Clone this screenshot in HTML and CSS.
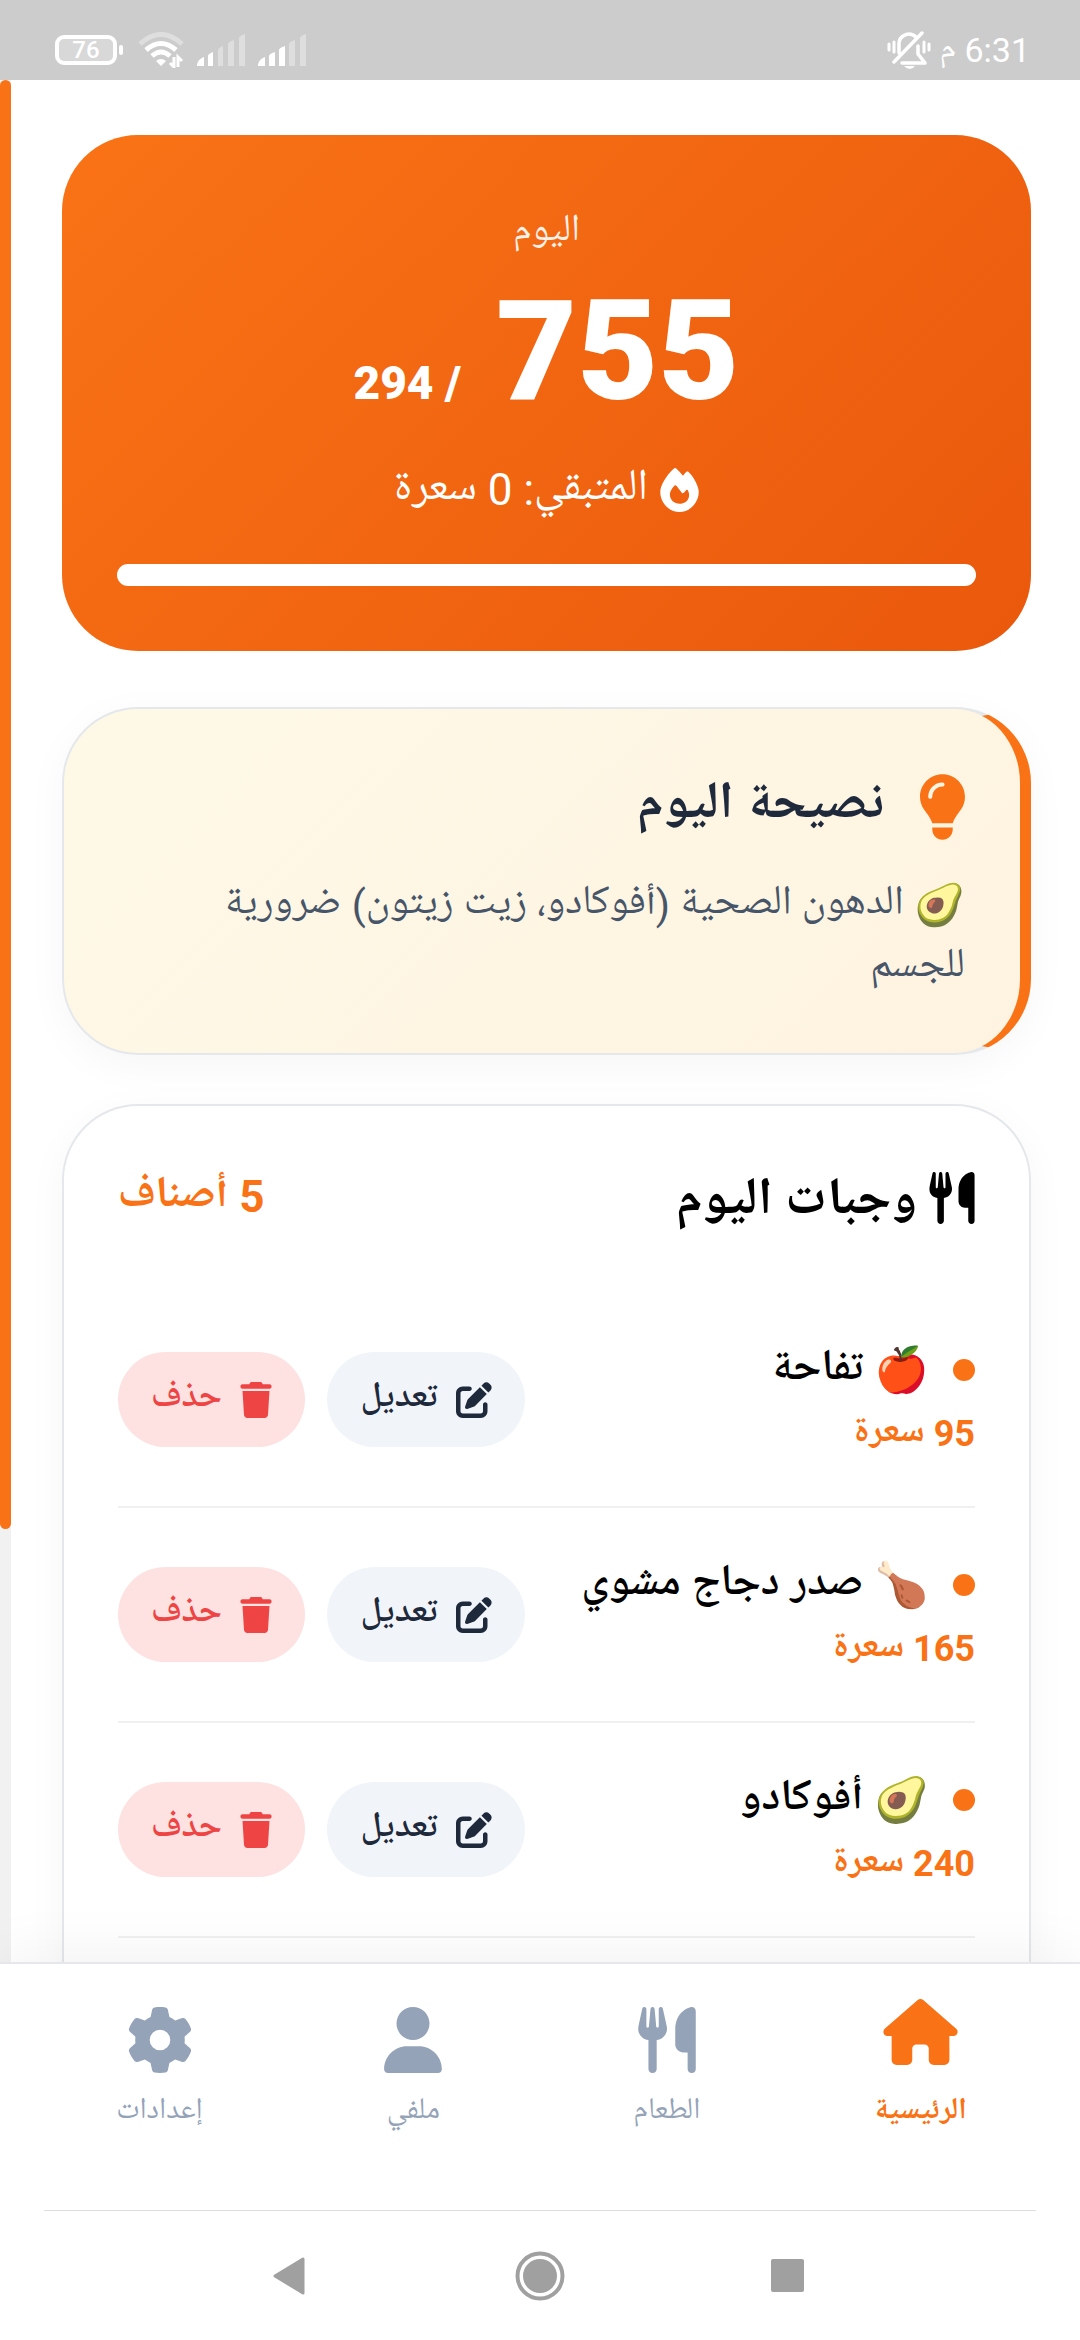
FILE: index.html
```html
<!DOCTYPE html>
<html lang="ar" dir="rtl">
<head>
<meta charset="utf-8">
<meta name="viewport" content="width=device-width, initial-scale=1">
<title>وجبات اليوم</title>
<link rel="stylesheet" href="styles.css">
</head>
<body>
<svg class="sprite" aria-hidden="true">
  <symbol id="utensils" viewBox="0 0 448 512"><path d="M416 0C400 0 288 32 288 176V288c0 35.300 28.700 64 64 64h32V480c0 17.700 14.300 32 32 32s32-14.300 32-32V352 240 32c0-17.700-14.300-32-32-32zM64 16C64 7.800 57.900 1 49.700 .1S34.200 4.600 32.400 12.500L2.100 148.800C.7 155.100 0 161.500 0 167.900c0 45.900 35.100 83.600 80 87.700V480c0 17.700 14.300 32 32 32s32-14.300 32-32V255.600c44.900-4.100 80-41.800 80-87.700c0-6.400-.7-12.800-2.100-19.100L191.600 12.500c-1.800-8-9.300-13.300-17.400-12.400S160 7.800 160 16V150.200c0 5.400-4.400 9.800-9.800 9.800c-5.100 0-9.300-3.900-9.800-9L127.900 14.600C127.200 6.300 120.300 0 112 0s-15.200 6.300-15.900 14.600L83.700 151c-.5 5.100-4.700 9-9.800 9c-5.400 0-9.800-4.400-9.800-9.800V16z"/></symbol>
  <symbol id="pen" viewBox="0 0 512 512"><path d="M471.600 21.700c-21.900-21.900-57.300-21.900-79.200 0L362.300 51.700l97.900 97.900 30.100-30.100c21.900-21.900 21.900-57.300 0-79.200L471.600 21.700zm-299.200 220c-6.100 6.100-10.800 13.600-13.500 21.900l-29.600 88.800c-2.900 8.600-.6 18.100 5.800 24.600s15.900 8.700 24.600 5.800l88.800-29.600c8.200-2.700 15.700-7.400 21.900-13.500L437.700 172.300 339.700 74.300 172.400 241.700zM96 64C43 64 0 107 0 160V416c0 53 43 96 96 96H352c53 0 96-43 96-96V320c0-17.700-14.300-32-32-32s-32 14.300-32 32v96c0 17.700-14.300 32-32 32H96c-17.700 0-32-14.300-32-32V160c0-17.700 14.300-32 32-32h96c17.700 0 32-14.300 32-32s-14.300-32-32-32H96z"/></symbol>
  <symbol id="trash" viewBox="0 0 448 512"><path d="M135.200 17.700L128 32H32C14.300 32 0 46.300 0 64S14.300 96 32 96H416c17.700 0 32-14.300 32-32s-14.300-32-32-32H320l-7.200-14.300C307.400 6.800 296.300 0 284.200 0H163.800c-12.100 0-23.200 6.800-28.600 17.700zM416 128H32L53.200 467c1.600 25.300 22.600 45 47.900 45H346.900c25.300 0 46.300-19.700 47.900-45L416 128z"/></symbol>
  <symbol id="signal-off" viewBox="0 0 48 32"><path d="M0 32c0-4 2-7 7-9v9zM11 32V22q0-2 5-4v14z"/><path opacity=".35" d="M21 32V16q0-2 5-4v20zM31 32V10q0-2 6-4v26zM42 32V4q0-2 6-4v32z"/></symbol>
  <symbol id="signal-on" viewBox="0 0 48 32"><path d="M0 32c0-4 2-7 7-9v9zM11 32V22q0-2 6-4v14zM21 32V16q0-2 6-4v20z"/><path opacity=".35" d="M31 32V10q0-2 6-4v26zM42 32V4q0-2 6-4v32z"/></symbol>
</svg>

<header class="status">
  <div class="status-group time">
    <span class="clock">6:31 م</span>
    <svg class="bell" viewBox="0 0 44 40" fill="none" stroke="currentColor" stroke-width="3.500" stroke-linecap="round"><path d="M12 23V15a10 10 0 0 1 17-8M31 16v8l7 9H15M7 32 35 3" stroke-linejoin="round"/><path d="M2 14v6M7 12v10M37 12v10M42 14v6" stroke-width="3"/><path d="M17 36h11q-5 6-11 0z" fill="currentColor" stroke="none"/></svg>
  </div>
  <div class="status-group">
    <svg class="signal" viewBox="0 0 48 32" fill="currentColor"><use href="#signal-on"/></svg>
    <svg class="signal" viewBox="0 0 48 32" fill="currentColor"><use href="#signal-off"/></svg>
    <svg class="wifi" viewBox="0 0 46 36" fill="none" stroke="currentColor" stroke-width="5"><path opacity=".35" d="M2 12Q23-7 44 12"/><path d="M8 18q15-13 30 0M14 24q9-8 18 0"/><path d="M23 34l-5-5q5-4 10 0z" fill="currentColor" stroke="none"/><path d="M36 25v10l-4-4M40 35V25l4 4" stroke-width="3"/></svg>
    <div class="battery"><span>76</span></div>
  </div>
</header>

<div class="viewport">
  <main class="content">
    <section class="card summary">
      <p class="summary-day">اليوم</p>
      <p class="summary-total">755 <span class="goal">/ 294</span></p>
      <p class="summary-left"><svg class="fire" viewBox="0 0 448 512" fill="currentColor"><path d="M159.300 5.400c7.800-7.300 19.900-7.200 27.700 .1c27.600 25.900 53.500 53.800 77.700 84c11-14.400 23.500-30.100 37-42.900c7.900-7.400 20.100-7.400 28 .1c34.600 33 63.900 76.600 84.500 118c20.300 40.800 33.800 82.500 33.800 111.900C448 404.200 348.200 512 224 512C98.400 512 0 404.100 0 276.500c0-38.400 17.800-85.300 45.400-131.700C73.300 97.700 112.700 48.600 159.300 5.400zM225.700 416c25.300 0 47.700-7 68.800-21c42.100-29.400 53.400-88.200 28.100-134.400c-4.500-9-16-9.600-22.500-2l-25.200 29.300c-6.600 7.600-18.500 7.400-24.700-.5c-16.500-21-46-58.500-62.800-79.800c-6.300-8-18.300-8.100-24.700-.1c-33.800 42.500-50.800 69.300-50.800 99.400C112 375.400 162.600 416 225.700 416z"/></svg><span>المتبقي: 0 سعرة</span></p>
      <div class="progress"></div>
    </section>

    <section class="card tip">
      <h2 class="tip-title"><svg class="bulb" viewBox="16 0 352 512" fill="currentColor"><path d="M272 384c9.600-31.900 29.500-59.100 49.200-86.200c5.200-7.100 10.400-14.200 15.400-21.400c19.800-28.500 31.400-63 31.400-100.300C368 78.800 289.200 0 192 0S16 78.800 16 176c0 37.300 11.600 71.900 31.400 100.300c5 7.200 10.200 14.300 15.400 21.400c19.800 27.100 39.700 54.400 49.200 86.200H272zM192 512c44.200 0 80-35.800 80-80V416H112v16c0 44.200 35.800 80 80 80zM112 176c0 8.800-7.200 16-16 16s-16-7.200-16-16c0-61.900 50.100-112 112-112c8.800 0 16 7.200 16 16s-7.200 16-16 16c-44.200 0-80 35.800-80 80z"/></svg>نصيحة اليوم</h2>
      <p class="tip-text">🥑 الدهون الصحية (أفوكادو، زيت زيتون) ضرورية للجسم</p>
    </section>

    <section class="card meals">
      <div class="meals-head">
        <h2 class="meals-title"><svg class="icon-title" viewBox="0 0 448 512" fill="currentColor"><use href="#utensils"/></svg>وجبات اليوم</h2>
        <span class="count">5 أصناف</span>
      </div>
      <ul class="list">
        <li class="meal">
          <div class="meal-info"><p class="meal-name"><span class="dot"></span>🍎 تفاحة</p><p class="meal-cal">95 سعرة</p></div>
          <div class="actions">
            <button class="btn edit"><svg class="icon-pen" viewBox="0 0 512 512" fill="currentColor"><use href="#pen"/></svg><span>تعديل</span></button>
            <button class="btn delete"><svg class="icon-trash" viewBox="0 0 448 512" fill="currentColor"><use href="#trash"/></svg><span>حذف</span></button>
          </div>
        </li>
        <li class="meal">
          <div class="meal-info"><p class="meal-name"><span class="dot"></span>🍗 صدر دجاج مشوي</p><p class="meal-cal">165 سعرة</p></div>
          <div class="actions">
            <button class="btn edit"><svg class="icon-pen" viewBox="0 0 512 512" fill="currentColor"><use href="#pen"/></svg><span>تعديل</span></button>
            <button class="btn delete"><svg class="icon-trash" viewBox="0 0 448 512" fill="currentColor"><use href="#trash"/></svg><span>حذف</span></button>
          </div>
        </li>
        <li class="meal">
          <div class="meal-info"><p class="meal-name"><span class="dot"></span>🥑 أفوكادو</p><p class="meal-cal">240 سعرة</p></div>
          <div class="actions">
            <button class="btn edit"><svg class="icon-pen" viewBox="0 0 512 512" fill="currentColor"><use href="#pen"/></svg><span>تعديل</span></button>
            <button class="btn delete"><svg class="icon-trash" viewBox="0 0 448 512" fill="currentColor"><use href="#trash"/></svg><span>حذف</span></button>
          </div>
        </li>
      </ul>
    </section>
  </main>
  <div class="track"><div class="thumb"></div></div>
</div>

<nav class="tabs">
  <a class="tab active" href="#home"><svg class="tab-icon home" viewBox="0 0 576 512" fill="currentColor"><path d="M575.800 255.500c0 18-15 32.100-32 32.100h-32l.7 160.200c0 2.700-.2 5.400-.5 8.100V472c0 22.100-17.900 40-40 40H392c-22.100 0-40-17.900-40-40V384c0-17.700-14.300-32-32-32H256c-17.700 0-32 14.300-32 32v88c0 22.100-17.900 40-40 40H104c-22.100 0-40-17.900-40-40V287.600H32c-18 0-32-14-32-32.100c0-9 3-17 10-24L266.400 8c7-7 15-8 22-8s15 2 21 7L564.800 231.500c8 7 12 15 11 24z"/></svg><span>الرئيسية</span></a>
  <a class="tab" href="#food"><svg class="tab-icon" viewBox="0 0 448 512" fill="currentColor"><use href="#utensils"/></svg><span>الطعام</span></a>
  <a class="tab" href="#profile"><svg class="tab-icon" viewBox="0 0 448 512" fill="currentColor"><path d="M224 256A128 128 0 1 0 224 0a128 128 0 1 0 0 256zm-45.700 48C79.800 304 0 383.800 0 482.300C0 498.700 13.300 512 29.700 512H418.300c16.400 0 29.700-13.300 29.700-29.700C448 383.800 368.200 304 269.700 304H178.300z"/></svg><span>ملفي</span></a>
  <a class="tab" href="#settings"><svg class="tab-icon" viewBox="0 0 512 512" fill="currentColor"><path d="M495.900 166.600c3.200 8.700 .5 18.400-6.400 24.600l-43.300 39.400c1.100 8.300 1.700 16.800 1.700 25.400s-.6 17.100-1.700 25.400l43.300 39.400c6.900 6.200 9.600 15.900 6.400 24.600c-4.400 11.900-9.700 23.300-15.800 34.300l-4.700 8.100c-6.600 11-14 21.400-22.100 31.200c-5.900 7.200-15.700 9.600-24.500 6.800l-55.700-17.700c-13.400 10.300-28.200 18.900-44 25.400l-12.500 57.100c-2 9.100-9 16.300-18.200 17.800c-13.800 2.300-28 3.500-42.500 3.500s-28.700-1.200-42.500-3.500c-9.200-1.500-16.200-8.700-18.200-17.800l-12.500-57.100c-15.800-6.500-30.600-15.100-44-25.400L83.100 425.900c-8.800 2.800-18.600 .3-24.500-6.800c-8.100-9.800-15.500-20.200-22.100-31.200l-4.700-8.100c-6.100-11-11.400-22.400-15.800-34.300c-3.200-8.700-.5-18.400 6.400-24.600l43.300-39.400C64.600 273.100 64 264.600 64 256s.6-17.100 1.700-25.400L22.400 191.200c-6.900-6.200-9.600-15.900-6.400-24.600c4.400-11.900 9.700-23.300 15.800-34.300l4.700-8.100c6.600-11 14-21.400 22.100-31.200c5.900-7.200 15.700-9.600 24.500-6.800l55.700 17.700c13.400-10.300 28.200-18.900 44-25.400l12.500-57.100c2-9.100 9-16.300 18.200-17.800C227.300 1.200 241.500 0 256 0s28.700 1.200 42.500 3.500c9.200 1.500 16.200 8.700 18.200 17.800l12.500 57.100c15.800 6.500 30.600 15.100 44 25.400l55.700-17.700c8.800-2.800 18.600-.3 24.500 6.800c8.100 9.800 15.500 20.200 22.100 31.200l4.700 8.100c6.100 11 11.400 22.400 15.800 34.300zM256 336a80 80 0 1 0 0-160 80 80 0 1 0 0 160z"/></svg><span>إعدادات</span></a>
</nav>

<footer class="system">
  <button class="sys" aria-label="التطبيقات الأخيرة"><svg viewBox="0 0 50 50" fill="currentColor"><rect x="8" y="8" width="33" height="33" rx="2"/></svg></button>
  <button class="sys" aria-label="الشاشة الرئيسية"><svg viewBox="0 0 50 50" fill="currentColor"><circle cx="25" cy="25" r="17"/><circle cx="25" cy="25" r="22.500" fill="none" stroke="currentColor" stroke-width="4"/></svg></button>
  <button class="sys" aria-label="رجوع"><svg viewBox="0 0 50 50" fill="currentColor" stroke="currentColor" stroke-width="3" stroke-linejoin="round"><path d="M8 25 36 8v34z"/></svg></button>
</footer>
</body>
</html>
```
FILE: styles.css
```css
* { box-sizing: border-box; }

body {
  margin: 0;
  height: 100vh;
  display: flex;
  flex-direction: column;
  background: #fff;
  color: #000;
  font-family: Roboto, "Noto Naskh Arabic UI", "Noto Naskh Arabic", "Noto Sans Arabic", "DejaVu Sans", "Noto Color Emoji", sans-serif;
}

h2, p, ul { margin: 0; padding: 0; }
svg { display: block; flex: none; }
button { border: 0; font-family: inherit; }
.sprite { position: absolute; width: 0; height: 0; }

/* device status bar */
.status {
  flex: none;
  height: 80px;
  padding: 20px 50px 0 55px;
  display: flex;
  align-items: center;
  justify-content: space-between;
  background: #ccc;
  color: #fff;
}
.status-group { display: flex; align-items: center; gap: 13px; }
.time { gap: 8px; }
.clock { font-size: 34px; line-height: 40px; }
.bell { width: 44px; height: 40px; }
.signal { width: 48px; height: 32px; }
.wifi { width: 46px; height: 36px; }
.battery {
  position: relative;
  width: 62px;
  height: 30px;
  margin-right: 8px;
  border: 4px solid #fff;
  border-radius: 9px;
  display: flex;
  align-items: center;
  justify-content: center;
  background: #d8d8d8;
  font-size: 24px;
  font-weight: 500;
}
.battery::after {
  content: "";
  position: absolute;
  right: -10px;
  width: 4px;
  height: 10px;
  border-radius: 2px;
  background: #fff;
}

/* scrolling area */
.viewport { flex: 1; min-height: 0; display: flex; }
.content {
  flex: 1;
  min-width: 0;
  overflow: hidden;
  display: flex;
  flex-direction: column;
  padding: 55px 49px 0 51px;
}
.track { flex: none; width: 11px; background: #f1f1f1; }
.thumb { height: 77%; border-radius: 6px; background: #f97316; }

.card {
  flex: none;
  border: 2px solid #e5e8eb;
  border-radius: 76px;
  box-shadow: 0 10px 40px rgba(0, 0, 0, .04);
}

.summary {
  height: 516px;
  margin-bottom: 56px;
  padding: 66px 55px 0;
  border: 0;
  background: linear-gradient(135deg, #f97316, #ea580c);
  color: #fff;
  text-align: center;
  box-shadow: none;
}
.summary-day { font-size: 38px; line-height: 62px; opacity: .9; }
.summary-total { font-size: 140px; font-weight: 900; line-height: 176px; }
.goal { font-size: 46px; line-height: 1; }
.summary-left {
  margin-top: 17px;
  display: flex;
  justify-content: center;
  align-items: center;
  gap: 12px;
  font-size: 44px;
  line-height: 68px;
}
.fire { width: 39px; height: 44px; }
.progress { margin-top: 40px; height: 22px; border-radius: 11px; background: #fff; }

.tip {
  height: 348px;
  margin-bottom: 49px;
  padding: 55px 55px 55px 66px;
  border-right: 11px solid #f97316;
  background: linear-gradient(135deg, #fef9e7, #fef3e0);
}
.tip-title {
  display: flex;
  align-items: center;
  gap: 36px;
  font-size: 52px;
  font-weight: 700;
  line-height: 86px;
  color: #1e293b;
}
.bulb { width: 45px; height: 66px; color: #f97316; }
.tip-text { margin-top: 24px; font-size: 41px; line-height: 63px; color: #475569; }

.meals {
  flex: 1 0 auto;
  padding: 55px 54px 0;
  border-bottom: 0;
  border-radius: 76px 76px 0 0;
}
.meals-head { display: flex; justify-content: space-between; height: 132px; }
.meals-title { display: flex; align-items: center; gap: 12px; height: 84px; font-size: 52px; font-weight: 700; line-height: 84px; }
.icon-title { width: 46px; height: 52px; margin-bottom: 10px; }
.count { font-size: 44px; font-weight: 700; line-height: 72px; color: #f97316; }

.list { list-style: none; }
.meal {
  display: flex;
  align-items: center;
  justify-content: space-between;
  height: 215px;
  border-bottom: 2px solid #f0f0f0;
}
.meal-name { display: flex; align-items: center; font-size: 44px; font-weight: 600; line-height: 68px; }
.dot { width: 22px; height: 22px; margin-left: 24px; border-radius: 50%; background: #f97316; }
.meal-cal { font-size: 36px; font-weight: 700; line-height: 60px; color: #f97316; }
.actions { display: flex; gap: 22px; }
.btn {
  display: flex;
  align-items: center;
  justify-content: center;
  gap: 18px;
  height: 95px;
  padding: 0;
  border-radius: 48px;
  font-size: 36px;
  font-weight: 600;
}
.btn span { padding-bottom: 4px; }
.edit { width: 198px; background: #f1f5f9; color: #1e293b; }
.delete { width: 187px; background: #fee2e2; color: #ef4444; }
.icon-pen { width: 36px; height: 36px; }
.icon-trash { width: 32px; height: 36px; }

/* bottom tabs */
.tabs {
  position: relative;
  flex: none;
  display: flex;
  height: 248px;
  padding: 43px 33px 0;
  border-top: 2px solid #e5e8eb;
  background: #fff;
  box-shadow: 0 -10px 54px rgba(0, 0, 0, .05);
  clip-path: inset(-80px 0 0 0);
}
.tab {
  flex: 1;
  display: flex;
  flex-direction: column;
  align-items: center;
  gap: 14px;
  color: #94a3b8;
  font-size: 30px;
  line-height: 50px;
  text-decoration: none;
}
.tab-icon { width: 66px; height: 66px; }
.home { width: 75px; margin-top: -8px; margin-bottom: 8px; }
.active { color: #f97316; font-weight: 700; }

/* system navigation */
.system {
  flex: none;
  display: flex;
  align-items: center;
  justify-content: center;
  gap: 198px;
  height: 130px;
  margin: 0 44px;
  border-top: 1px solid #ddd;
  color: #a0a0a0;
}
.sys { padding: 0; background: none; color: inherit; }
.sys svg { width: 50px; height: 50px; }
```
